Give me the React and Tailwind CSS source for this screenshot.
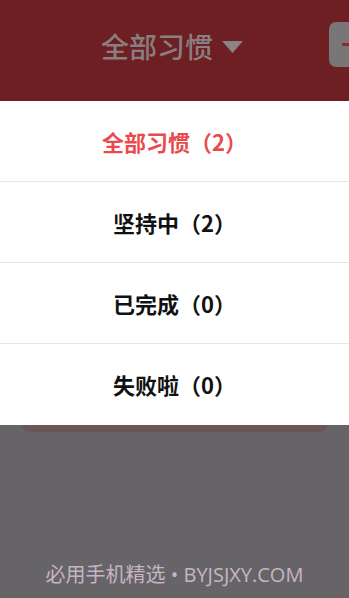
import React from 'react';

const items = [
  { label: '全部习惯（2）', active: true },
  { label: '坚持中（2）' },
  { label: '已完成（0）' },
  { label: '失败啦（0）' },
];

const font = { fontFamily: '"Noto Sans CJK SC", "Noto Sans", sans-serif' };

export default function App() {
  return (
    <div className="w-[349px] h-[598px] bg-[#666466] flex flex-col overflow-hidden" style={font}>
      {/* Header (dimmed) */}
      <div className="h-[101px] bg-[#6e1f23] flex items-center relative shrink-0">
        <div className="flex-1 flex items-center justify-center gap-[8px] pr-[4px] pb-[10px]">
          <span className="text-[28px] font-medium text-[#8a7f80]">全部习惯</span>
          <svg width="23" height="14" viewBox="0 0 23 14" className="mt-[2px]">
            <path d="M1 1h21l-10.5 12z" fill="#8a8485" />
          </svg>
        </div>
        <div className="absolute left-[329px] top-[22px] w-[40px] h-[45px] rounded-[7px] bg-[#7a7576] flex items-center">
          <div className="ml-[13px] w-[20px] h-[3px] bg-[#8e2a2e]" />
        </div>
      </div>

      {/* Menu */}
      <div className="bg-white flex flex-col shrink-0">
        {items.map((it, i) => (
          <div
            key={it.label}
            className={`h-[81px] flex items-center justify-center ${i < items.length - 1 ? 'border-b border-[#e6e6e6]' : ''}`}
          >
            <span className={`text-[22px] font-bold ${it.active ? 'text-[#ea4a4c]' : 'text-[#111]'}`}>{it.label}</span>
          </div>
        ))}
      </div>

      {/* card edge under menu */}
      <div className="mx-[22px] h-[7px] rounded-b-[10px] bg-[#6a5654] shrink-0" />

      <div className="flex-1 flex items-end justify-center pb-[8px]">
        <span className="text-[20px] text-[#c6b4c6]" style={{ fontFamily: '"Open Sans", "Noto Sans CJK SC", sans-serif' }}>
          必用手机精选 • BYJSJXY.COM
        </span>
      </div>
    </div>
  );
}
